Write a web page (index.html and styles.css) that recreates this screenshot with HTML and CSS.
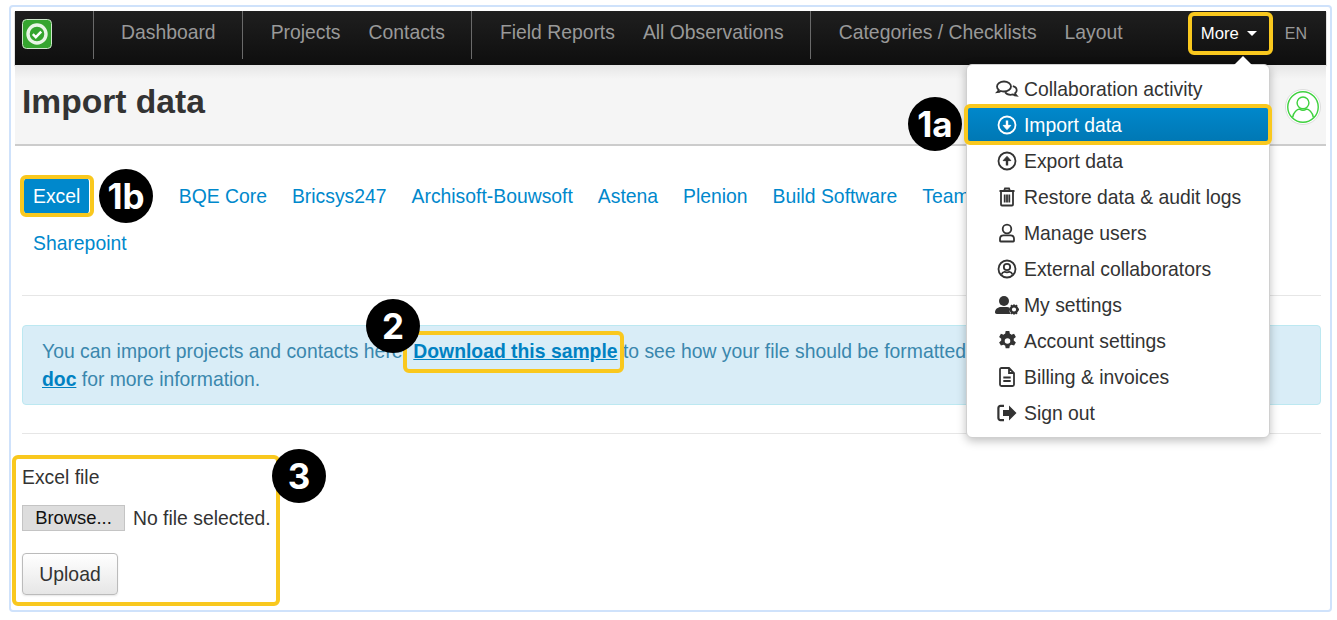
FILE: index.html
```html
<!DOCTYPE html>
<html lang="en">
<head>
<meta charset="utf-8">
<title>Import data</title>
<link rel="stylesheet" href="styles.css">
</head>
<body>
<div class="frame">
  <nav class="topnav">
    <a class="brand" href="#">
      <svg width="30" height="30" viewBox="0 0 30 30"><rect x="0.5" y="0.5" width="29" height="29" rx="4" fill="#35a52f" stroke="#cfe6cc"/><circle cx="15" cy="15" r="9" fill="none" stroke="#e8f5e6" stroke-width="3.4"/><path d="M10.8 15.2l3 3 5.4-5.6" fill="none" stroke="#fff" stroke-width="2.4"/></svg>
    </a>
    <div class="navgroup"><a href="#">Dashboard</a></div>
    <div class="navgroup"><a href="#">Projects</a><a href="#">Contacts</a></div>
    <div class="navgroup"><a href="#">Field Reports</a><a href="#">All Observations</a></div>
    <div class="navgroup"><a href="#">Categories / Checklists</a><a href="#">Layout</a></div>
    <div class="navright">
      <a class="more" href="#">More<span class="caret"></span></a>
      <a class="lang" href="#">EN</a>
    </div>
  </nav>

  <header class="band">
    <h1>Import data</h1>
    <span class="avatar">
      <svg width="32" height="32" viewBox="0 0 34 34" fill="none" stroke="#3fd13f" stroke-width="1.5"><circle cx="17" cy="17" r="16.2"/><circle cx="17" cy="12.6" r="6.3"/><path d="M6 28c.8-6 5-8.6 7.4-8.8 2.300 1.500 4.900 1.500 7.200 0 2.400.2 6.600 2.800 7.400 8.800"/></svg>
    </span>
  </header>

  <main class="content">
    <div class="tabs">
      <a class="active" href="#">Excel</a>
      <a class="tab-hidden" href="#">Dalux</a>
      <a href="#">BQE Core</a>
      <a href="#">Bricsys247</a>
      <a href="#">Archisoft-Bouwsoft</a>
      <a href="#">Astena</a>
      <a href="#">Plenion</a>
      <a href="#">Build Software</a>
      <a href="#">Teamleader</a>
      <a href="#">Sharepoint</a>
    </div>
    <hr class="rule">
    <p class="alert">You can import projects and contacts here. <a href="#">Download this sample</a> to see how your file should be formatted. Check our help<br><a href="#">doc</a> for more information.</p>
    <hr class="rule rule-second">
    <form class="upload">
      <label class="filelabel">Excel file</label>
      <div class="fileline"><button class="browse" type="button">Browse...</button><span>No file selected.</span></div>
      <button class="submit" type="button">Upload</button>
    </form>
  </main>

  <div class="menu">
    <span class="menuarrow"></span>
    <a href="#"><span class="ico"><svg width="24" height="20" viewBox="0 0 24 20" fill="none" stroke="currentColor" stroke-width="1.800"><path d="M9 2.500c-3.900 0-7 2.200-7 5 0 1.300.7 2.500 1.800 3.400-.3.900-.8 1.600-1.500 2.300 1.400-.1 2.600-.5 3.500-1.200.9.300 2 .5 3.200.5 3.900 0 7-2.200 7-5s-3.100-5-7-5z"/><path d="M17.800 7.200c2.300.6 3.900 2.200 3.900 4 0 1.200-.6 2.200-1.600 3 .2.900.7 1.700 1.400 2.400-1.400-.1-2.500-.6-3.400-1.200-.8.200-1.600.4-2.500.4-2.400 0-4.500-1-5.500-2.500"/></svg></span>Collaboration activity</a>
      <a class="current" href="#"><span class="ico"><svg width="20" height="20" viewBox="0 0 20 20" fill="none" stroke="currentColor" stroke-width="1.800"><circle cx="10" cy="10" r="8.500"/><path d="M10 5.500v7" stroke-width="2.400"/><path d="M6.200 10.400L10 14.600l3.800-4.200z" fill="currentColor" stroke-width="1"/></svg></span>Import data</a>
      <a href="#"><span class="ico"><svg width="20" height="20" viewBox="0 0 20 20" fill="none" stroke="currentColor" stroke-width="1.800"><circle cx="10" cy="10" r="8.500"/><path d="M10 14.500v-7" stroke-width="2.400"/><path d="M6.200 9.600L10 5.400l3.800 4.200z" fill="currentColor" stroke-width="1"/></svg></span>Export data</a>
      <a href="#"><span class="ico"><svg width="18" height="20" viewBox="0 0 18 20" fill="none" stroke="currentColor" stroke-width="1.800"><path d="M1.500 4h15M6 4l1-2.500h4L12 4M3 4v13.500c0 .6.500 1 1 1h10c.5 0 1-.4 1-1V4M6.700 7.500v8M9 7.500v8M11.300 7.500v8"/></svg></span>Restore data &amp; audit logs</a>
      <a href="#"><span class="ico"><svg width="18" height="20" viewBox="0 0 18 20" fill="none" stroke="currentColor" stroke-width="1.800"><circle cx="9" cy="6" r="4.300"/><path d="M5.500 12.300h7c2 0 3.500 1.500 3.500 3.500v2c0 .4-.3.700-.7.700H2.700c-.4 0-.7-.3-.7-.7v-2c0-2 1.500-3.500 3.500-3.500z"/></svg></span>Manage users</a>
      <a href="#"><span class="ico"><svg width="20" height="20" viewBox="0 0 20 20" fill="none" stroke="currentColor" stroke-width="1.800"><circle cx="10" cy="10" r="8.500"/><circle cx="10" cy="8" r="3.200"/><path d="M4.500 15.500c.7-2 2-2.600 3-2.700 1.600.7 3.400.7 5 0 1 .1 2.300.7 3 2.700"/></svg></span>External collaborators</a>
      <a href="#"><span class="ico"><svg width="24" height="20" viewBox="0 0 24 20" fill="currentColor"><circle cx="9" cy="6" r="5"/><path d="M6 12h6c1 0 1.900.2 2.700.7-.5 1.300-.4 4.600 1 6.300H1.800C.8 19 0 18.300 0 17.300 0 14.300 2.700 12 6 12z"/><circle cx="19" cy="14.500" r="3.300" fill="none" stroke="currentColor" stroke-width="2.400"/><path d="M18 9.500h2v2h-2zM18 17.500h2v2h-2zM14 13.500h2v2h-2zM22 13.500h2v2h-2zM15.400 10.500l1.500-1 1 1.700-1.500 1zM20 17.800l1.500-1 1 1.700-1.500 1zM21.100 9.500l1.500 1-1 1.700-1.500-1zM16.900 19.500l-1.500-1 1-1.700 1.500 1z"/></svg></span>My settings</a>
      <a href="#"><span class="ico"><svg width="19" height="20" viewBox="1.800 .7 16.400 18.600" fill="currentColor"><path fill-rule="evenodd" d="M8.300 .7h3.400l.5 2.600c.5.200 1 .4 1.400.8l2.500-.9 1.700 3-2 1.700c.1.600.1 1.100 0 1.700l2 1.700-1.700 3-2.500-.9c-.4.400-.9.600-1.400.8l-.5 2.600H8.300l-.5-2.600c-.5-.2-1-.4-1.400-.8l-2.500.9-1.700-3 2-1.700c-.1-.6-.1-1.100 0-1.700l-2-1.700 1.700-3 2.500.9c.4-.4.900-.6 1.400-.8zM10 7.400a2.600 2.600 0 1 0 0 5.200 2.600 2.600 0 0 0 0-5.200z"/></svg></span>Account settings</a>
      <a href="#"><span class="ico"><svg width="16" height="20" viewBox="0 0 16 20" fill="none" stroke="currentColor" stroke-width="1.800"><path d="M10 1H2.500C1.700 1 1 1.700 1 2.500v15c0 .8.700 1.500 1.500 1.500h11c.8 0 1.500-.7 1.500-1.500V6zM10 1v5h5M4.300 10.500h7.400M4.300 14h7.400"/></svg></span>Billing &amp; invoices</a>
      <a href="#"><span class="ico"><svg width="20" height="18" viewBox="0 0 20 18" fill="currentColor"><path d="M7 3H3.500C3 3 2.500 3.500 2.500 4v10c0 .5.500 1 1 1H7v2.200H3.500C1.700 17.200.300 15.800.300 14V4C.300 2.200 1.700.8 3.500.8H7z"/><path d="M12 1.500L19.500 9 12 16.500V12H6V6h6z"/></svg></span>Sign out</a>
  </div>

  <span class="mark mark-more"></span>
  <span class="mark mark-import"></span>
  <span class="mark mark-excel"></span>
  <span class="mark mark-sample"></span>
  <span class="mark mark-form"></span>

  <span class="step step-1a">1a</span>
  <span class="step step-1b">1b</span>
  <span class="step step-2">2</span>
  <span class="step step-3">3</span>
</div>
</body>
</html>
```
FILE: styles.css
```css
* { box-sizing: border-box; }
html, body { margin: 0; padding: 0; background: #fff; }
body {
  font-family: "Liberation Sans", Arial, sans-serif;
  font-size: 19.35px;
  color: #333;
  overflow: hidden;
}
a { text-decoration: none; }

.frame {
  margin: 5px 5px 0 9px;
  height: 607px;
  border: 2px solid #cfe2fb;
  border-radius: 4px;
  padding: 4px;
}

/* top bar */
.topnav {
  display: flex;
  align-items: flex-start;
  height: 54px;
  background: linear-gradient(#1f1f1f, #0e0e0e);
  box-shadow: 0 1px 1px #555;
}
.brand { display: block; margin: 8px 40.500px 0 7px; height: 30px; width: 30px; }
.navgroup {
  display: flex;
  height: 48px;
  align-items: center;
  padding: 0 12.500px 0 13.500px;
  border-left: 1px solid #6a6a6a;
}
.navgroup a { padding: 0 14px; color: #999; line-height: 42px; margin-top: -7px; }
.navright { margin-left: auto; display: flex; align-items: center; height: 46px; padding-right: 19px; }
.more {
  display: flex;
  align-items: center;
  justify-content: center;
  width: 84px;
  height: 42px;
  color: #fff;
  font-size: 16.7px;
  margin-right: 13px;
  padding-right: 2px;
}
.caret {
  margin-left: 8px;
  margin-bottom: 2px;
  border-left: 5.500px solid transparent;
  border-right: 5.500px solid transparent;
  border-top: 5.500px solid #fff;
}
.lang { color: #999; font-size: 16px; }

/* title band */
.band {
  display: flex;
  align-items: center;
  justify-content: space-between;
  height: 81px;
  padding: 0 5px 5px 7px;
  background: linear-gradient(#e6e6e6, #f5f5f5 14px);
  border-bottom: 2px solid #ccc;
}
.band h1 { margin: 0; font-size: 33.6px; line-height: 40px; color: #333; }
.avatar {
  display: block;
  width: 36px;
  height: 36px;
  margin: 9px 0 0;
  padding: 1px;
  border: 1px solid #ddd;
  border-radius: 50%;
  background: #fff;
}

/* content */
.content { padding: 0 5px 0 7px; }
.tabs {
  display: flex;
  flex-wrap: wrap;
  gap: 11px 1px;
  margin-left: -1px;
  padding: 32px 220px 0 0;
}
.tabs a {
  display: block;
  height: 36px;
  line-height: 36px;
  padding: 0 12px;
  color: #0088cc;
  border-radius: 4px;
}
.tabs a.active { background: #0088cc; color: #fff; margin-left: 3px; padding: 0 9px; }
.tabs a.tab-hidden { padding-right: 14px; }
.rule { margin: 34px 0 0; border: 0; border-top: 1px solid #e6e6e6; height: 1px; }
.rule-second { margin-top: 28px; }
.alert {
  margin: 29px 0 0;
  height: 80px;
  padding: 11px 19px;
  line-height: 28px;
  color: #3a87ad;
  background: #d9edf7;
  border: 1px solid #bce8f1;
  border-radius: 4px;
}
.alert a { color: #0081c2; font-weight: 700; text-decoration: underline; }
.upload { margin-top: 33px; }
.filelabel { display: block; line-height: 20px; color: #333; }
.fileline { display: flex; align-items: center; gap: 8px; margin-top: 18px; }
.browse {
  width: 103px;
  height: 26px;
  padding: 0;
  font: inherit;
  font-size: 18.400px;
  color: #111;
  background: #ddd;
  border: 1px solid #c4c4c4;
}
.submit {
  display: block;
  margin-top: 22px;
  width: 96px;
  height: 42px;
  padding: 0;
  font: inherit;
  color: #333;
  background: linear-gradient(#fff, #e6e6e6);
  border: 1px solid #bbb;
  border-radius: 4px;
  box-shadow: 0 1px 2px rgba(0,0,0,.1);
}

/* dropdown */
.menu {
  position: absolute;
  left: 966px;
  top: 64px;
  width: 304px;
  height: 374px;
  padding: 6px 0 0;
  background: #fff;
  border: 1px solid #d0d0d0;
  border-radius: 6px;
  box-shadow: 0 3px 10px rgba(0,0,0,.25);
}
.menuarrow {
  position: absolute;
  top: -9px;
  left: 267px;
  border-left: 9px solid transparent;
  border-right: 9px solid transparent;
  border-bottom: 9px solid #fff;
}
.menu a {
  display: flex;
  align-items: center;
  height: 36px;
  padding-left: 28px;
  color: #333;
}
.menu a.current { background: linear-gradient(#0088cc, #0077b3); color: #fff; }
.ico {
  display: flex;
  align-items: center;
  justify-content: center;
  width: 24px;
  margin-right: 5px;
}

/* annotations laid over the screenshot */
.mark {
  position: absolute;
  border: 4px solid #f9c81e;
  border-radius: 6px;
  pointer-events: none;
}
.mark-more { left: 1188px; top: 12px; width: 85px; height: 43px; }
.mark-import { left: 964px; top: 104px; width: 308px; height: 41px; }
.mark-excel { left: 20px; top: 175px; width: 74px; height: 42px; }
.mark-sample { left: 403px; top: 331px; width: 221px; height: 42px; }
.mark-form { left: 12px; top: 455px; width: 268px; height: 151px; }
.step {
  position: absolute;
  display: flex;
  align-items: center;
  justify-content: center;
  width: 54px;
  height: 54px;
  border-radius: 50%;
  background: #000;
  color: #fff;
  font-family: Inter, "Liberation Sans", sans-serif;
  font-weight: 700;
  font-size: 35px;
}
.step-1a { left: 908px; top: 97px; }
.step-1b { left: 99px; top: 169px; }
.step-2 { left: 366px; top: 299px; }
.step-3 { left: 272px; top: 449px; }
```
